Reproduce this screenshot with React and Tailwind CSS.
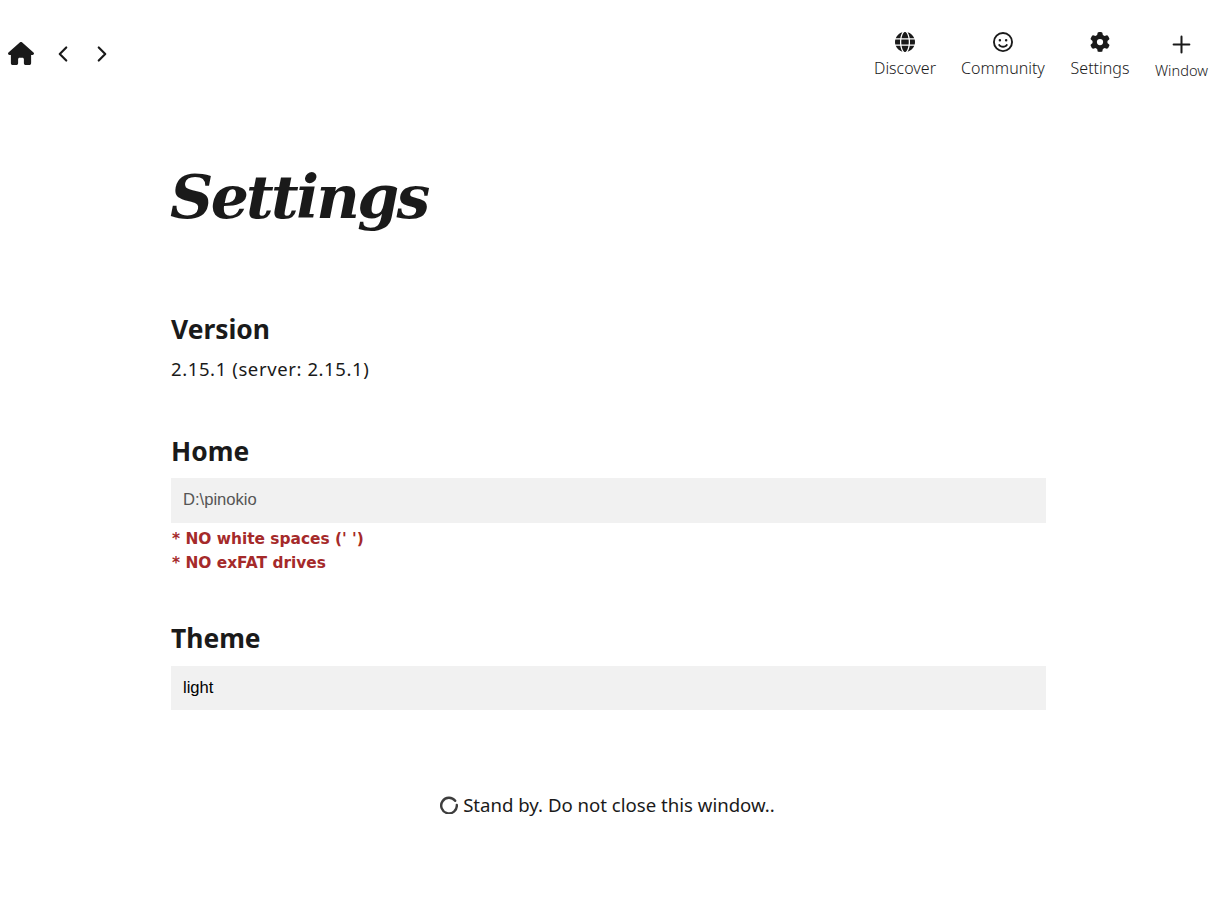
import { FaGear, FaGlobe, FaHouse, FaRegFaceSmile } from "react-icons/fa6";
import { ChevronLeft, ChevronRight, Plus } from "lucide-react";

const NAV = [
  { label: "Discover", icon: <FaGlobe className="h-[20px] w-[20px]" />, width: "w-[62px]" },
  { label: "Community", icon: <FaRegFaceSmile className="h-[20px] w-[20px]" />, width: "w-[84px]" },
  { label: "Settings", icon: <FaGear className="h-[20px] w-[20px]" />, width: "w-[60px]" },
];

const SANS = "font-['Noto_Sans',sans-serif]";

function Heading({ children }) {
  return <h2 className={`text-[26.4px] font-bold leading-[32px] text-[#1a1a1a] ${SANS}`}>{children}</h2>;
}

export default function App() {
  return (
    <div className="min-h-[907px] bg-white text-[#1a1a1a]">
      <header className="flex h-[107px] items-start justify-between">
        <div className="flex items-center pl-[8px] pt-[40px]">
          <FaHouse className="h-[27px] w-[26px] text-[#1a1a1a]" />
          <ChevronLeft className="ml-[16px] h-[26px] w-[26px]" strokeWidth={2} />
          <ChevronRight className="ml-[13px] h-[26px] w-[26px]" strokeWidth={2} />
        </div>
        <nav className="flex items-start pr-[7px] pt-[32px] font-['Noto_Sans',sans-serif] text-[16px] font-light text-[#1a1a1a]">
          {NAV.map((item) => (
            <div key={item.label} className={`mr-[25px] flex flex-col items-center ${item.width}`}>
              {item.icon}
              <span className="mt-[6px] whitespace-nowrap leading-[20px]">{item.label}</span>
            </div>
          ))}
          <div className="flex w-[53px] flex-col items-center">
            <Plus className="mt-[-1px] h-[27px] w-[27px]" strokeWidth={1.8} />
            <span className="mt-[2px] whitespace-nowrap text-[14.6px] leading-[20px]">Window</span>
          </div>
        </nav>
      </header>

      <main className="ml-[171px] w-[875px]">
        <h1 className="ml-[-1px] mt-[49px] font-['DejaVu_Serif',serif] text-[60px] font-bold italic leading-[82px] tracking-[-2.7px] text-[#1a1a1a]">
          Settings
        </h1>

        <section className="mt-[75px]">
          <Heading>Version</Heading>
          <p className={`mt-[11px] text-[18.5px] leading-[26px] tracking-[0.6px] ${SANS}`}>2.15.1 (server: 2.15.1)</p>
        </section>

        <section className="mt-[53px]">
          <Heading>Home</Heading>
          <div className="mt-[11px] flex h-[45px] items-center bg-[#f1f1f1] px-[12px] font-['Liberation_Sans',sans-serif] text-[16.6px] text-[#555555]">
            D:\pinokio
          </div>
          <div className="mt-[4px] pl-[1px] font-['DejaVu_Sans',sans-serif] text-[15.4px] font-bold leading-[24px] text-[#a52a2a]">
            <div>* NO white spaces (' ')</div>
            <div>* NO exFAT drives</div>
          </div>
        </section>

        <section className="mt-[47px]">
          <Heading>Theme</Heading>
          <div className="mt-[12px] flex h-[44px] items-center bg-[#f1f1f1] px-[12px] font-['Liberation_Sans',sans-serif] text-[16.6px] text-black">
            light
          </div>
        </section>
      </main>

      <div className={`mt-[82px] flex items-center justify-center text-[18.6px] leading-[26px] ${SANS}`}>
        <svg viewBox="0 0 18 18" className="mr-[5px] h-[18px] w-[18px]" fill="none">
          <path d="M15.2 4.8A7.8 7.8 0 1 0 16.8 9" stroke="#3d3d3d" strokeWidth="2.4" strokeLinecap="round" />
        </svg>
        Stand by. Do not close this window..
      </div>
    </div>
  );
}
